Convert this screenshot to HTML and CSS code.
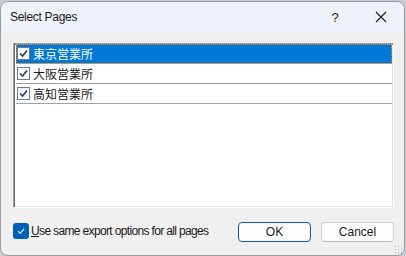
FILE: index.html
```html
<!DOCTYPE html>
<html lang="ja">
<head>
  <meta charset="UTF-8" />
  <title>Select Pages</title>
  <link rel="stylesheet" href="styles.css">
</head>
<body>
  <div class="dialog">
    <!-- Title bar -->
    <div class="title-bar">
      <span class="title">Select Pages</span>
      <span class="help-btn">?</span>
      <span class="close-btn">
        <svg width="12" height="12" viewBox="0 0 12 12"><path d="M1 1 L11 11 M11 1 L1 11" stroke="#1a1a1a" stroke-width="1.1" fill="none"/></svg>
      </span>
    </div>

    <div class="content">
      <!-- Page list -->
      <div class="page-list">
        <div class="page-row selected">
          <span class="box"><svg width="9" height="9" viewBox="0 0 9 9"><path d="M1 4.5 L3.5 7 L8 1.5" stroke="#1f3f6a" stroke-width="1.6" fill="none"/></svg></span>
          <span class="page-name">東京営業所</span>
        </div>
        <div class="page-row">
          <span class="box"><svg width="9" height="9" viewBox="0 0 9 9"><path d="M1 4.5 L3.5 7 L8 1.5" stroke="#1f3f6a" stroke-width="1.6" fill="none"/></svg></span>
          <span class="page-name">大阪営業所</span>
        </div>
        <div class="page-row">
          <span class="box"><svg width="9" height="9" viewBox="0 0 9 9"><path d="M1 4.5 L3.5 7 L8 1.5" stroke="#1f3f6a" stroke-width="1.6" fill="none"/></svg></span>
          <span class="page-name">高知営業所</span>
        </div>
      </div>

      <!-- Footer -->
      <div class="footer">
        <label class="same-options">
          <span class="check-on"><svg width="10" height="10" viewBox="0 0 10 10"><path d="M2 5.2 L4.2 7.3 L8.2 2.8" stroke="#fff" stroke-width="1.1" fill="none"/></svg></span>
          <span class="option-text"><u>U</u>se same export options for all pages</span>
        </label>
        <div class="buttons">
          <button class="btn default">OK</button>
          <button class="btn">Cancel</button>
        </div>
      </div>
    </div>
    <div class="grip"></div>
  </div>
</body>
</html>
```

FILE: styles.css
```css
* {
  margin: 0;
  padding: 0;
  box-sizing: border-box;
}

body {
  background-color: #c8ccd2;
  font-family: "Liberation Sans", "Noto Sans CJK JP", sans-serif;
  font-size: 11px;
  color: #1a1a1a;
  padding-top: 1px;
  overflow: hidden;
}

.dialog {
  width: 405px;
  height: 255px;
  background: #f0f0f0;
  border: 1px solid #9a9a9a;
  border-radius: 8px;
  overflow: hidden;
  display: flex;
  flex-direction: column;
  position: relative;
}

.title-bar {
  height: 30px;
  background: #eef3f9;
  display: flex;
  align-items: center;
  padding-left: 9px;
}

.title {
  flex: 1;
  font-size: 12px;
  letter-spacing: -0.3px;
  margin-top: -1px;
}

.help-btn {
  width: 46px;
  text-align: center;
  font-size: 13px;
}

.close-btn {
  width: 46px;
  display: flex;
  justify-content: center;
  align-items: center;
}

.content {
  flex: 1;
  padding: 11px 10px 0 12px;
  display: flex;
  flex-direction: column;
}

.page-list {
  height: 165px;
  width: 381px;
  background: white;
  border: 1px solid;
  border-color: #a0a0a0 #ffffff #ffffff #a0a0a0;
  box-shadow: inset 1px 1px 0 #696969, inset -1px -1px 0 #e3e3e3;
  padding: 0 1px 0 2px;
}

.page-row {
  height: 20px;
  display: flex;
  align-items: center;
  border-bottom: 1px solid #a0a0a0;
  padding-left: 1px;
}

.page-row.selected {
  background: #0078d7;
  color: white;
  outline: 1px dotted #f08a24;
  outline-offset: -1px;
}

.box {
  width: 13px;
  height: 13px;
  background: linear-gradient(#f4f6f9, #ffffff);
  border: 1px solid #6d7b8d;
  display: flex;
  justify-content: center;
  align-items: center;
  margin-right: 3px;
}

.page-name {
  font-family: "Noto Sans CJK JP", sans-serif;
  font-size: 12px;
  line-height: 14px;
}

.footer {
  display: flex;
  align-items: center;
  justify-content: space-between;
  margin-top: 14px;
}

.same-options {
  display: flex;
  align-items: center;
  gap: 2px;
  margin-top: -2px;
}

.option-text {
  white-space: nowrap;
  font-size: 12px;
  letter-spacing: -0.65px;
}

.check-on {
  width: 16px;
  height: 16px;
  background: #005fb8;
  border-radius: 3px;
  display: flex;
  justify-content: center;
  align-items: center;
}

.buttons {
  display: flex;
  gap: 10px;
}

.btn {
  width: 73px;
  height: 20px;
  font-family: "Liberation Sans", sans-serif;
  font-size: 12px;
  background: #fdfdfd;
  border: 1px solid #d0d0d0;
  border-bottom-color: #bcbcbc;
  border-radius: 4px;
  color: #1a1a1a;
}

.btn.default {
  border: 1px solid #005fb8;
}

.grip {
  position: absolute;
  right: 2px;
  bottom: 2px;
  width: 8px;
  height: 8px;
  background-image: radial-gradient(circle, #b0b0b0 0.8px, transparent 1px);
  background-size: 3px 3px;
}
```
